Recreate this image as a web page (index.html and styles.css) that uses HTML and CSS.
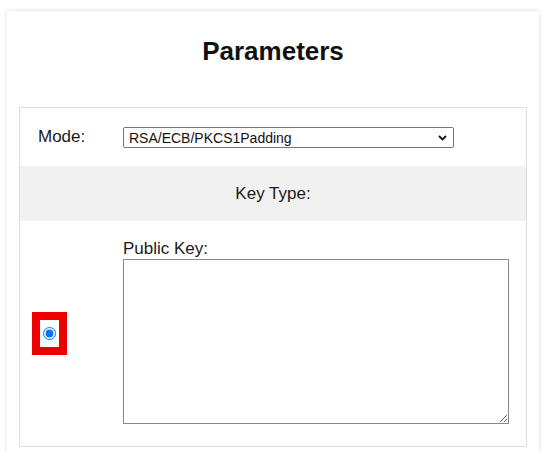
FILE: index.html
```html
<!DOCTYPE html>
<html>
<head>
<meta charset="utf-8">
<link rel="stylesheet" href="styles.css">
</head>
<body>
<div class="page">
  <div class="card">
    <h1 class="title">Parameters</h1>
    <div class="params">
      <div class="row row-mode">
        <label class="label" for="mode">Mode:</label>
        <div class="select-wrap">
          <select id="mode" class="select">
            <option>RSA/ECB/PKCS1Padding</option>
          </select>
          <svg class="chev" width="9" height="6" viewBox="0 0 9 6"><path d="M1 1 L4.5 4.5 L8 1" fill="none" stroke="#111" stroke-width="1.8"/></svg>
        </div>
      </div>
      <div class="row-keytype">Key Type:</div>
      <div class="row row-key">
        <div class="radio-cell">
          <span class="radio-box"><input type="radio" name="kt" class="radio" checked></span>
        </div>
        <div class="key-col">
          <div class="key-label">Public Key:</div>
          <textarea class="key-area"></textarea>
        </div>
      </div>
    </div>
  </div>
</div>
</body>
</html>
```
FILE: styles.css
```css
html, body {
  margin: 0;
  padding: 0;
  background: #fff;
}
body {
  font-family: "Liberation Sans", Arial, sans-serif;
  color: #1a1a1a;
}
.page {
  padding: 11px 10px 0 7px;
}
.card {
  width: 532px;
  height: 441px;
  box-sizing: border-box;
  background: #fff;
  box-shadow: 0 0 4px rgba(0, 0, 0, 0.16);
  padding: 25px 12px 5px 12px;
  display: flex;
  flex-direction: column;
}
.title {
  margin: 0;
  font-size: 26px;
  line-height: 30px;
  font-weight: bold;
  text-align: center;
  color: #111;
  height: 30px;
  margin-bottom: 41px;
}
.params {
  border: 1px solid #dedede;
  flex: 1;
  display: flex;
  flex-direction: column;
}
.row {
  display: grid;
  grid-template-columns: 103px 1fr;
}
.row-mode {
  height: 58px;
  align-items: center;
}
.label {
  font-size: 17px;
  padding-left: 18px;
}
.select-wrap {
  position: relative;
  width: 331px;
  height: 21px;
  margin-top: 1px;
}
.select {
  appearance: none;
  -webkit-appearance: none;
  width: 331px;
  height: 21px;
  box-sizing: border-box;
  border: 1px solid #767676;
  border-radius: 2px;
  background: #fff;
  font-family: "Liberation Sans", Arial, sans-serif;
  font-size: 14px;
  color: #111;
  padding: 0 0 0 5px;
  margin: 0;
}
.chev {
  position: absolute;
  right: 7px;
  top: 8px;
  pointer-events: none;
}
.row-keytype {
  height: 55px;
  background: #f1f1f1;
  display: flex;
  align-items: center;
  justify-content: center;
  font-size: 17px;
}
.row-key {
  flex: 1;
  padding-right: 19px;
  align-items: center;
}
.radio-cell {
  padding-left: 12px;
  display: flex;
  align-items: center;
}
.radio-box {
  display: inline-block;
  border: 8px solid #ee0000;
  padding: 7px 3px;
  background: #fff;
  line-height: 0;
}
.radio {
  margin: 0;
  width: 13px;
  height: 13px;
  vertical-align: top;
}
.key-col {
  align-self: start;
  padding-top: 18px;
}
.key-label {
  font-size: 17px;
  line-height: 20px;
}
.key-area {
  display: block;
  width: 386px;
  height: 165px;
  box-sizing: border-box;
  border: 1px solid #8a8a8a;
  margin: 0;
  padding: 2px;
  resize: both;
}
```
